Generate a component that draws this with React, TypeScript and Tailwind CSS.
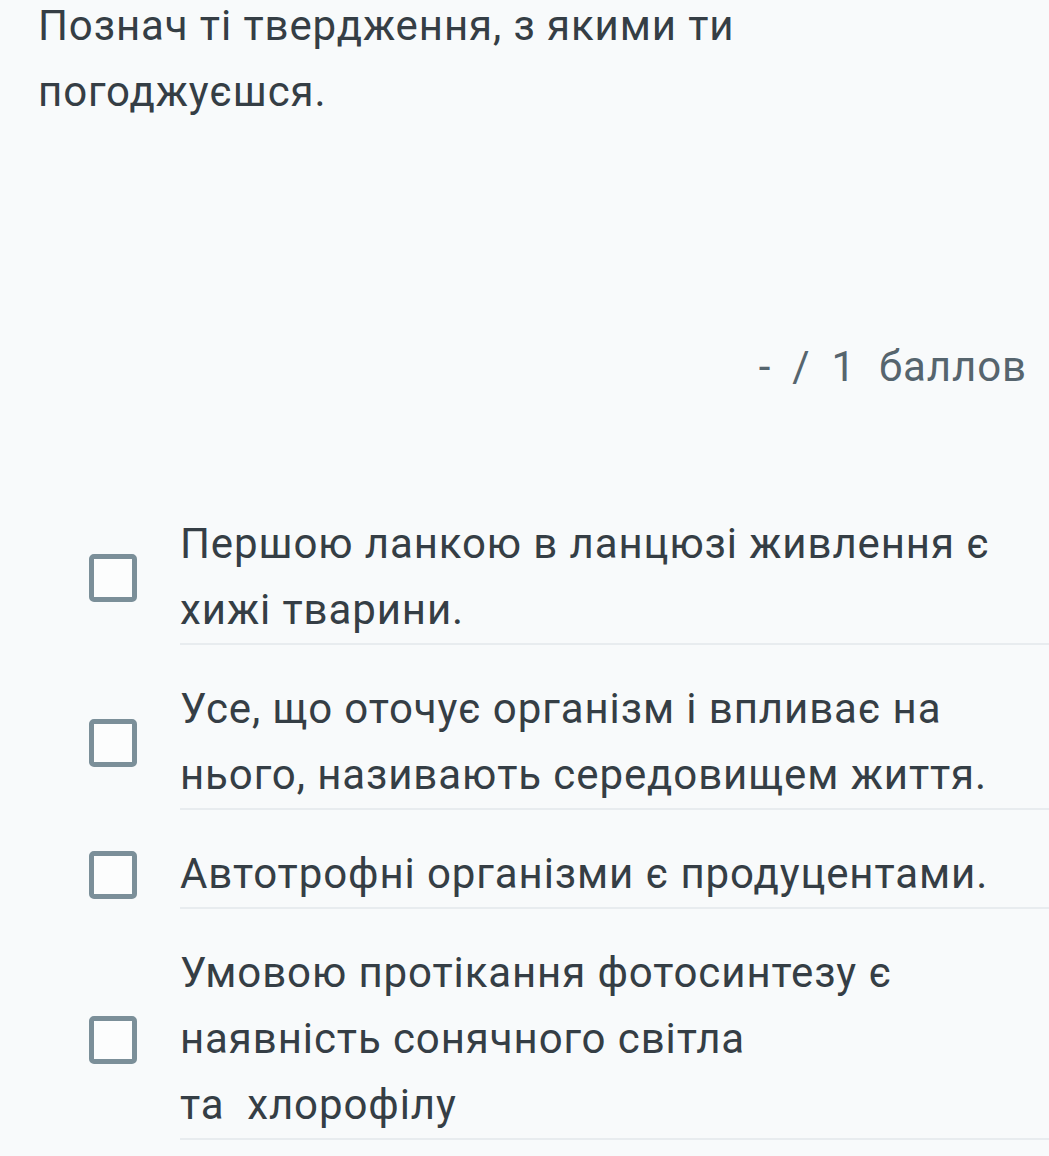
const options: { lines: string[] }[] = [
  { lines: ['Першою ланкою в ланцюзі живлення є хижі тварини.'] },
  { lines: ['Усе, що оточує організм і впливає на нього, називають середовищем життя.'] },
  { lines: ['Автотрофні організми є продуцентами.'] },
  { lines: ['Умовою протікання фотосинтезу є наявність сонячного світла', 'та  хлорофілу'] },
]

export default function App() {
  return (
    <div
      className="min-h-[1156px] w-full overflow-hidden bg-[#f8fafb] text-[42px] leading-[66px] tracking-[0.9px] text-[#353e45]"
      style={{ fontFamily: 'Roboto, "Noto Sans", sans-serif' }}
    >
      <h1 className="-mt-[7px] pl-[38px] pr-[260px] font-normal">
        Познач ті твердження, з якими ти погоджуєшся.
      </h1>

      <div className="mt-[209px] flex justify-end gap-[21px] pr-[22px] text-[#56656e]">
        <span>-</span>
        <span>/</span>
        <span>1</span>
        <span className="ml-[2px]">баллов</span>
      </div>

      <div className="mt-[111px]">
        {options.map((o, i) => (
          <Option key={i} lines={o.lines} first={i === 0} />
        ))}
      </div>
    </div>
  )
}

function Option({ lines, first }: { lines: string[]; first: boolean }) {
  return (
    <label className={`flex items-center ${first ? '' : 'mt-[31px]'}`}>
      <span className="ml-[89px] mr-[43px] block h-[48px] w-[48px] shrink-0 rounded-[5px] border-[5px] border-[#7b8f99] bg-[#fcfdfd]" />
      <span className="block flex-1 border-b-2 border-[#e8ecef] pr-[24px]">
        {lines.map((l, i) => (
          <span key={i} className="block whitespace-pre-wrap">
            {l}
          </span>
        ))}
      </span>
    </label>
  )
}
